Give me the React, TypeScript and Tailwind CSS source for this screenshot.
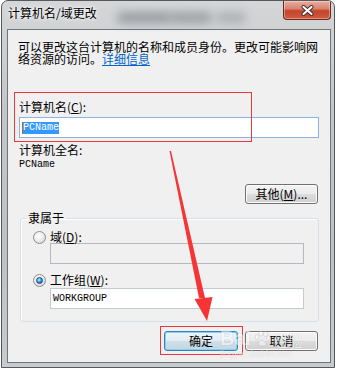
import React from "react";

function Radio({ checked }: { checked?: boolean }) {
  return (
    <div className="w-[13px] h-[13px] shrink-0 rounded-full border border-[#8a8d90] bg-[radial-gradient(circle_at_40%_35%,#ffffff_0%,#eeeeee_45%,#c9cbcd_100%)] flex items-center justify-center">
      {checked && (
        <div className="w-[7px] h-[7px] rounded-full border border-[#17467c] bg-[radial-gradient(circle_at_40%_35%,#c4ecff_0%,#3a9be0_50%,#0d4e98_100%)]" />
      )}
    </div>
  );
}

const btn =
  "h-[20px] rounded-[3px] border border-[#707070] bg-[linear-gradient(180deg,#f3f3f3_0%,#ebebeb_50%,#dddddd_50%,#cfcfcf_100%)] shadow-[inset_0_0_0_1px_#fcfcfc] flex items-center justify-center text-[12px] leading-[12px] text-black";

export default function App() {
  return (
    <div className="relative w-[337px] h-[370px] bg-white overflow-hidden font-['Noto_Sans_CJK_SC','Noto_Sans',sans-serif] text-black">
      {/* Window */}
      <div className="ml-[1px] w-[334px] h-[368px] rounded-t-[7px] border border-[#55595d] bg-[linear-gradient(180deg,#d4d6d8_0%,#c3c6c9_30%,#bec1c4_70%,#c8cbce_100%)] flex flex-col overflow-hidden">
        {/* Title bar */}
        <div className="relative h-[28px] shrink-0 flex items-start justify-between">
          <div className="absolute left-[115px] top-[11px] w-[55px] h-[11px] rounded-full bg-[#80858a] blur-[5px] opacity-70" />
          <div className="absolute left-[168px] top-[11px] w-[42px] h-[11px] rounded-full bg-[#80858a] blur-[5px] opacity-65" />
          <div className="absolute left-[214px] top-[11px] w-[30px] h-[11px] rounded-full bg-[#90959a] blur-[5px] opacity-55" />
          <div className="relative pl-[6px] pt-[6px] text-[12px] leading-[12px] [text-shadow:0_0_6px_#fff,0_0_3px_#fff]">
            计算机名/域更改
          </div>
          <div className="relative mr-[3px] w-[48px] h-[19px] rounded-b-[4px] border border-t-0 border-[#6b2a20] bg-[linear-gradient(180deg,#e9ae9f_0%,#d98471_42%,#c4442c_55%,#cf5a3e_100%)] shadow-[inset_0_0_0_1px_rgba(255,255,255,0.35)] flex items-center justify-center">
            <svg width="13" height="11" viewBox="0 0 13 11">
              <path d="M2.5 2 L10.5 9 M10.5 2 L2.5 9" stroke="#3a2926" strokeWidth="4" strokeLinecap="round" />
              <path d="M2.5 2 L10.5 9 M10.5 2 L2.5 9" stroke="#ffffff" strokeWidth="2.2" strokeLinecap="round" />
            </svg>
          </div>
        </div>

        {/* Client area */}
        <div className="ml-[5px] mr-[3px] mb-[4px] flex-1 border border-[#70757a] bg-[#f0f0f0] flex flex-col items-start text-[12px] leading-[12px]">
          <p className="ml-[10px] mt-[11px] w-[302px]">
            可以更改这台计算机的名称和成员身份。更改可能影响网络资源的访问。<span className="text-[#0066cc] underline">详细信息</span>
          </p>

          <div className="ml-[11px] mt-[36px]">
            计算机名(<u>C</u>):
          </div>
          <div className="ml-[11px] mt-[4px] w-[300px] h-[21px] border border-[#8fb3dc] bg-white flex items-center pl-[2px]">
            <span className="bg-[#3399ff] text-white font-['Liberation_Mono',monospace] text-[10px] leading-[12px] border-l border-[#c06010]">
              PCName
            </span>
          </div>

          <div className="ml-[11px] mt-[6px]">计算机全名:</div>
          <div className="ml-[11px] mt-[3px] font-['Liberation_Mono',monospace] text-[10px] leading-[12px]">
            PCName
          </div>

          <div className={`${btn} ml-[237px] mt-[13px] w-[73px]`}>
            其他(<u>M</u>)...
          </div>

          <fieldset className="ml-[12px] mt-[8px] w-[299px] border border-[#d5dfe5] rounded-[3px] pb-[12px] shadow-[inset_1px_1px_0_#ffffff]">
            <legend className="ml-[5px] px-[2px] leading-[12px]">隶属于</legend>
            <div className="mt-[7px] ml-[12px] h-[12px] flex items-center gap-[4px]">
              <Radio />
              <span>
                域(<u>D</u>):
              </span>
            </div>
            <div className="ml-[29px] w-[254px] h-[21px] border border-[#b5b9bd] bg-[#f0f0f0]" />
            <div className="mt-[10px] ml-[12px] h-[12px] flex items-center gap-[4px]">
              <Radio checked />
              <span>
                工作组(<u>W</u>):
              </span>
            </div>
            <div className="mt-[2px] ml-[29px] w-[254px] h-[21px] border border-[#c3cad3] bg-white flex items-center pl-[2px] font-['Liberation_Mono',monospace] text-[10px] leading-[12px]">
              WORKGROUP
            </div>
          </fieldset>

          <div className="ml-[156px] mt-[9px] flex gap-[7px]">
            <div className="h-[20px] w-[74px] rounded-[3px] border border-[#3c7fb1] bg-[linear-gradient(180deg,#eef5f9_0%,#e2edf3_50%,#d0dfe8_50%,#c4d6e2_100%)] shadow-[inset_0_0_0_1px_#7fd3f7] flex items-center justify-center text-[12px] leading-[12px]">
              确定
            </div>
            <div className={`${btn} w-[73px]`}>取消</div>
          </div>
        </div>
      </div>

      {/* Annotations */}
      <div className="absolute left-[14px] top-[92px] w-[238px] h-[50px] border border-[#e8383d]" />
      <div className="absolute left-[160px] top-[326px] w-[83px] h-[29px] border border-[#e8383d]" />

      {/* Watermark */}
      <div className="absolute left-[220px] top-[328px] opacity-50 text-white [text-shadow:0_0_1px_#8a8a8a]">
        <div className="flex items-end gap-[2px] leading-none">
          <span className="font-['Liberation_Sans',sans-serif] font-bold text-[20px]">Bai</span>
          <svg width="18" height="18" viewBox="0 0 18 18" className="opacity-90">
            <g fill="#ffffff" stroke="#9a9a9a" strokeWidth="0.6">
              <ellipse cx="4" cy="7" rx="2" ry="2.6" />
              <ellipse cx="8" cy="3.5" rx="2" ry="2.6" />
              <ellipse cx="12.5" cy="4" rx="2" ry="2.6" />
              <ellipse cx="15.5" cy="8" rx="1.8" ry="2.4" />
              <path d="M5 14 C6 9 12 9 13.5 14 C13 17 6 17 5 14 Z" />
            </g>
          </svg>
          <span className="text-[15px]">经验</span>
        </div>
        <div className="mt-[2px] font-['Liberation_Sans',sans-serif] text-[9px] leading-[9px]">jingyan.baidu.com</div>
      </div>

      <svg className="absolute left-0 top-0" width="337" height="370" viewBox="0 0 337 370">
        <polygon points="169.5,151 171,151 205,298 199,298" fill="#f53535" />
        <polygon points="194.5,299 212.5,297 207,321" fill="#f53535" />
      </svg>
    </div>
  );
}
